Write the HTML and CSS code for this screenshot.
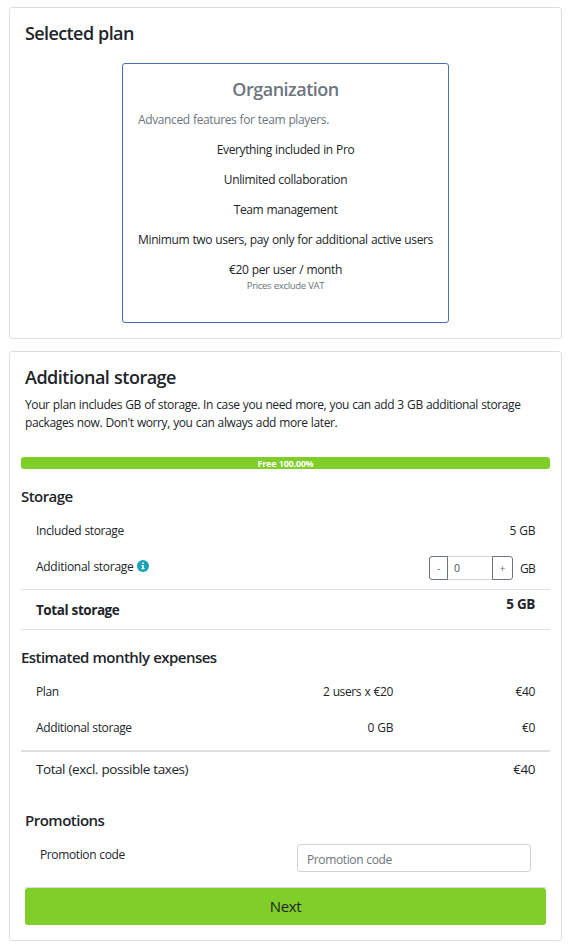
FILE: index.html
```html
<!DOCTYPE html>
<html lang="en">
<head>
<meta charset="utf-8">
<title>Selected plan</title>
<link rel="stylesheet" href="styles.css">
</head>
<body>
<section class="card card-plan">
  <h2 class="title">Selected plan</h2>
  <div class="plan">
    <h3 class="plan-name">Organization</h3>
    <p class="plan-intro">Advanced features for team players.</p>
    <p>Everything included in Pro</p>
    <p>Unlimited collaboration</p>
    <p>Team management</p>
    <p class="plan-users">Minimum two users, pay only for additional active users</p>
    <p class="plan-price">€20 per user / month</p>
    <small class="plan-vat">Prices exclude VAT</small>
  </div>
</section>

<section class="card card-storage">
  <h2 class="title title-storage">Additional storage</h2>
  <p class="lead">Your plan includes GB of storage. In case you need more, you can add 3 GB additional storage<br>packages now. Don't worry, you can always add more later.</p>
  <div class="wide">
    <div class="bar">Free 100.00%</div>
    <h4 class="subtitle">Storage</h4>
    <div class="row"><span>Included storage</span><span>5 GB</span></div>
    <div class="row row-add">
      <span class="label">Additional storage
        <svg class="info" viewBox="0 0 12 12"><circle cx="6" cy="6" r="6"/><path d="M5.2 2.4h1.7v1.5H5.2zM4.5 4.9h2.3v3.2h.7v1.1h-3V8.1h.7V6h-.7z"/></svg>
      </span>
      <span class="amount">
        <span class="stepper"><button class="minus">-</button><input class="qty" value="0"><button class="plus">+</button></span>
        <span class="unit">GB</span>
      </span>
    </div>
    <div class="row row-total"><span class="total-label">Total storage</span><span class="total-value">5 GB</span></div>
    <h4 class="subtitle expenses">Estimated monthly expenses</h4>
    <div class="row cost"><span>Plan</span><span>2 users x €20</span><span>€40</span></div>
    <div class="row cost"><span>Additional storage</span><span>0 GB</span><span>€0</span></div>
    <div class="row row-sum"><span>Total (excl. possible taxes)</span><span>€40</span></div>
  </div>
  <h4 class="subtitle promo-title">Promotions</h4>
  <div class="promo"><label for="code">Promotion code</label><input id="code" class="code" placeholder="Promotion code"></div>
  <div class="action"><button class="next">Next</button></div>
</section>
</body>
</html>
```
FILE: styles.css
```css
* { box-sizing: border-box; }
body {
  margin: 0;
  padding: 7px 14px 4px 9px;
  background: #fff;
  color: #212529;
  font: 12px/18px "Segoe UI", "Open Sans", "Noto Sans", sans-serif;
  letter-spacing: -0.38px;
  word-spacing: 0.5px;
}
h2, h3, h4, p { margin: 0; }
input, button {
  font: inherit;
  letter-spacing: inherit;
  word-spacing: inherit;
  color: inherit;
  margin: 0;
}

.card {
  border: 1px solid #dfdfdf;
  border-radius: 3px;
  padding: 15px;
}
.card-plan { height: 332px; margin-bottom: 12px; }
.card-storage { height: 590px; }
.title {
  padding-bottom: 2px;
  font-size: 18px;
  line-height: 20px;
  font-weight: 550;
  letter-spacing: -0.6px;
}
.title-storage { letter-spacing: -0.5px; }

.plan {
  width: 327px;
  height: 260px;
  margin: 18px auto 0;
  padding: 15px 0;
  border: 1px solid #4a6fac;
  border-radius: 3px;
  text-align: center;
}
.plan p { margin-bottom: 12px; }
.plan-name {
  margin-bottom: 12px;
  color: #6c757d;
  font-size: 18px;
  line-height: 20px;
  font-weight: 550;
  letter-spacing: -0.5px;
}
.plan .plan-intro { padding-left: 15px; text-align: left; color: #6c757d; }
.plan .plan-price { margin-bottom: 0; }
.plan-vat {
  display: block;
  color: #6c757d;
  font-size: 9.6px;
  line-height: 14px;
}

.lead { margin-top: 7px; white-space: nowrap; letter-spacing: -0.395px; }
.wide { margin: 25px -4px 0; }
.bar {
  height: 12px;
  border-radius: 3px;
  background: #80ce29;
  color: #fff;
  font-size: 9px;
  line-height: 13px;
  font-weight: 700;
  letter-spacing: -0.25px;
  text-align: center;
}
.subtitle {
  margin-top: 19px;
  padding-bottom: 2px;
  font-size: 15px;
  line-height: 16px;
  font-weight: 550;
  letter-spacing: -0.55px;
}
.row {
  display: flex;
  justify-content: space-between;
  height: 36px;
  padding: 10px 15px 8px;
}
.subtitle + .row { margin-top: 6px; }
.row-add { height: 41px; }
.label { display: flex; gap: 3px; align-items: center; height: 18px; letter-spacing: -0.28px; }
.info { width: 12px; height: 12px; margin-top: -2px; fill: #17a2b8; }
.info path { fill: #fff; }
.amount { display: flex; align-items: center; gap: 7px; height: 24px; margin-top: -2px; }
.unit { padding-top: 2px; letter-spacing: -0.7px; }
.stepper { display: flex; width: 84px; height: 24px; font-size: 10.5px; }
.minus, .plus {
  padding: 0;
  border: 1px solid #6c757d;
  background: #fff;
  color: #6c757d;
}
.minus { width: 19px; border-radius: 3px 0 0 3px; }
.plus { width: 21px; border-radius: 0 3px 3px 0; }
.qty {
  width: 44px;
  padding: 0 6px;
  border: solid #ced4da;
  border-width: 1px 0;
  border-radius: 0;
  color: #495057;
}
.row-total {
  height: 41px;
  padding-top: 5px;
  border: solid #dee2e6;
  border-width: 1px 0;
  font-size: 13.5px;
  font-weight: 700;
  letter-spacing: -0.45px;
}
.total-label { padding-top: 6px; }
.cost { display: grid; grid-template-columns: 1fr 1fr 142px; }
.cost span + span { text-align: right; }
.row-sum {
  height: 40px;
  margin-top: 5px;
  padding-top: 8px;
  border-top: 2px solid #dfdfdf;
  font-size: 13.5px;
  letter-spacing: -0.45px;
}
.promo-title { margin-top: 22px; letter-spacing: -0.5px; }
.promo { display: flex; justify-content: space-between; padding: 14px 15px 15px; }
.promo label { margin-top: 2px; }
.code {
  width: 234px;
  height: 28px;
  padding: 2px 9px 0;
  border: 1px solid #ced4da;
  border-radius: 3px;
}
.code::placeholder { color: #6c757d; opacity: 1; }
.action { border-top: 1px solid #dfdfdf; }
.next {
  display: block;
  width: 100%;
  height: 37px;
  padding: 0 0 2px;
  border: 0;
  border-radius: 3px;
  background: #80ce29;
  font-size: 15px;
}
```
